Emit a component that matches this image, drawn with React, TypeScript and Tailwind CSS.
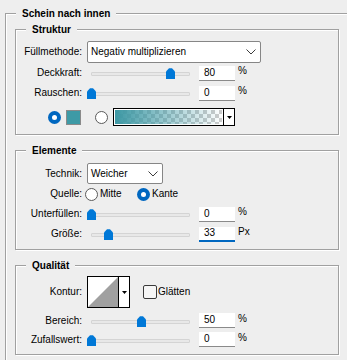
import React from 'react';

const BG = 'bg-[#eeeeee]';

const Group = ({ title, className, children }: { title: string; className?: string; children?: React.ReactNode }) => (
    <div className={`relative border border-[#a0a0a0] shadow-[inset_1px_1px_0_#ffffff,1px_1px_0_#ffffff] ${className ?? ''}`}>
        <span className={`absolute left-[10px] top-[-6px] ${BG} px-[6px] font-bold leading-[12px]`}>{title}</span>
        {children}
    </div>
);

const Label = ({ children }: { children: React.ReactNode }) => (
    <div className="w-[66px] shrink-0 text-right leading-[12px]">{children}</div>
);

const Chevron = () => (
    <svg width="10" height="6" viewBox="0 0 10 6">
        <path d="M0.5 0.5 L5 5 L9.5 0.5" fill="none" stroke="#3c3c3c" strokeWidth="1" />
    </svg>
);

const Select = ({ value, width, height }: { value: string; width: string; height: string }) => (
    <div className={`ml-[5px] flex ${width} ${height} items-center justify-between rounded-[2px] border border-[#868686] bg-white pl-[3px] pr-[4px]`}>
        <span className="leading-[12px]">{value}</span>
        <Chevron />
    </div>
);

const Thumb = () => (
    <svg width="9" height="11" viewBox="0 0 9 11">
        <path d="M3 0.3 H6 L9 3.5 V11 H0 V3.5 Z" fill="#0078d7" />
    </svg>
);

// pos: 0..1 along the track
const Slider = ({ pos }: { pos: number }) => (
    <div className="relative ml-[5px] h-full w-[107px] shrink-0">
        <div className="absolute left-[4px] top-[9px] h-[4px] w-[99px] rounded-[1px] border border-[#d4d4d4] bg-[#e8e8e8]" />
        <div className="absolute top-[5px] flex" style={{ left: `${Math.round(pos * 99)}px` }}>
            <Thumb />
        </div>
    </div>
);

const NumInput = ({ value, active }: { value: string; active?: boolean }) => (
    <div
        className={`ml-[5px] flex h-[15px] w-[36px] shrink-0 items-center bg-white pl-[5px] leading-[12px] ${
            active ? 'border-b-2 border-[#0067c0]' : 'border-b border-[#8a8a8a]'
        }`}
    >
        {value}
    </div>
);

const SliderRow = ({ label, pos, value, unit, active, height = 'h-[20px]' }: { label: string; pos: number; value: string; unit: string; active?: boolean; height?: string }) => (
    <div className={`flex ${height} items-center`}>
        <Label>{label}</Label>
        <Slider pos={pos} />
        <NumInput value={value} active={active} />
        <span className="ml-[3px] mt-[2px] self-start leading-[12px]">{unit}</span>
    </div>
);

const Radio = ({ checked }: { checked?: boolean }) =>
    checked ? (
        <div className="flex h-[13px] w-[13px] shrink-0 items-center justify-center rounded-full bg-[#0067c0]">
            <div className="h-[5px] w-[5px] rounded-full bg-white" />
        </div>
    ) : (
        <div className="h-[13px] w-[13px] shrink-0 rounded-full border border-[#5a5a5a] bg-white" />
    );

const DownTriangle = () => (
    <svg width="5" height="3" viewBox="0 0 5 3">
        <path d="M0 0 H5 L2.5 3 Z" fill="#000000" />
    </svg>
);

const GradientPicker = () => (
    <div className="ml-[5px] flex h-[18px] w-[122px] border border-black bg-white">
        <div className="flex-1 p-[1px]">
            <svg width="100%" height="100%" preserveAspectRatio="none">
                <defs>
                    <pattern id="checker" width="8" height="8" patternUnits="userSpaceOnUse">
                        <rect width="8" height="8" fill="#ffffff" />
                        <rect width="4" height="4" fill="#cccccc" />
                        <rect x="4" y="4" width="4" height="4" fill="#cccccc" />
                    </pattern>
                    <linearGradient id="teal" x1="0" x2="1" y1="0" y2="0">
                        <stop offset="0" stopColor="#3d98a4" stopOpacity="1" />
                        <stop offset="1" stopColor="#3d98a4" stopOpacity="0" />
                    </linearGradient>
                </defs>
                <rect width="100%" height="100%" fill="url(#checker)" />
                <rect width="100%" height="100%" fill="url(#teal)" />
            </svg>
        </div>
        <div className="flex w-[11px] items-center justify-center border-l border-black">
            <DownTriangle />
        </div>
    </div>
);

export default function App() {
    return (
        <div className={`h-[360px] w-[347px] overflow-hidden ${BG} pl-[5px] pt-[13px] font-['Liberation_Sans',Arial,sans-serif] text-[10px] text-black`}>
            <Group title="Schein nach innen" className="h-[420px] w-[380px] pl-[9px] pt-[15px]">
                {/* Struktur */}
                <Group title="Struktur" className="h-[106px] w-[324px] pt-[11px]">
                    <div className="flex h-[22px] items-center">
                        <Label>Füllmethode:</Label>
                        <Select value="Negativ multiplizieren" width="w-[174px]" height="h-[22px]" />
                    </div>
                    <SliderRow label="Deckkraft:" pos={0.8} value="80" unit="%" />
                    <SliderRow label="Rauschen:" pos={0} value="0" unit="%" />
                    <div className="mt-[3px] flex h-[22px] items-center pl-[32px]">
                        <Radio checked />
                        <div className="ml-[5px] h-[15px] w-[15px] border border-[#8a8a8a] bg-[#3e9aa6]" />
                        <div className="ml-[14px]">
                            <Radio />
                        </div>
                        <GradientPicker />
                    </div>
                </Group>

                {/* Elemente */}
                <Group title="Elemente" className="mt-[15px] h-[100px] w-[324px] pt-[12px]">
                    <div className="flex h-[21px] items-center">
                        <Label>Technik:</Label>
                        <Select value="Weicher" width="w-[76px]" height="h-[21px]" />
                    </div>
                    <div className="flex h-[20px] items-center">
                        <Label>Quelle:</Label>
                        <div className="ml-[3px] flex w-[52px] items-center">
                            <Radio />
                            <span className="ml-[2px] leading-[12px]">Mitte</span>
                        </div>
                        <Radio checked />
                        <span className="ml-[2px] leading-[12px]">Kante</span>
                    </div>
                    <SliderRow label="Unterfüllen:" pos={0} value="0" unit="%" />
                    <SliderRow label="Größe:" pos={0.17} value="33" unit="Px" active />
                </Group>

                {/* Qualität */}
                <Group title="Qualität" className="mt-[15px] h-[90px] w-[324px] pt-[10px]">
                    <div className="flex h-[32px] items-center">
                        <Label>Kontur:</Label>
                        <div className="ml-[5px] flex h-[32px] w-[43px] border border-black bg-white">
                            <svg width="30" height="30" viewBox="0 0 30 30">
                                <rect width="30" height="30" fill="#ffffff" />
                                <path d="M0 30 L30 0 V30 Z" fill="#a0a0a0" />
                            </svg>
                            <div className="flex flex-1 items-center justify-center border-l border-black">
                                <DownTriangle />
                            </div>
                        </div>
                        <div className="ml-[13px] h-[14px] w-[14px] rounded-[2px] border border-[#3a3a3a] bg-[#f6f6f6]" />
                        <span className="ml-[1px] leading-[12px]">Glätten</span>
                    </div>
                    <div className="mt-[3px]">
                        <SliderRow label="Bereich:" pos={0.5} value="50" unit="%" height="h-[19px]" />
                        <SliderRow label="Zufallswert:" pos={0} value="0" unit="%" height="h-[19px]" />
                    </div>
                </Group>
            </Group>
        </div>
    );
}
